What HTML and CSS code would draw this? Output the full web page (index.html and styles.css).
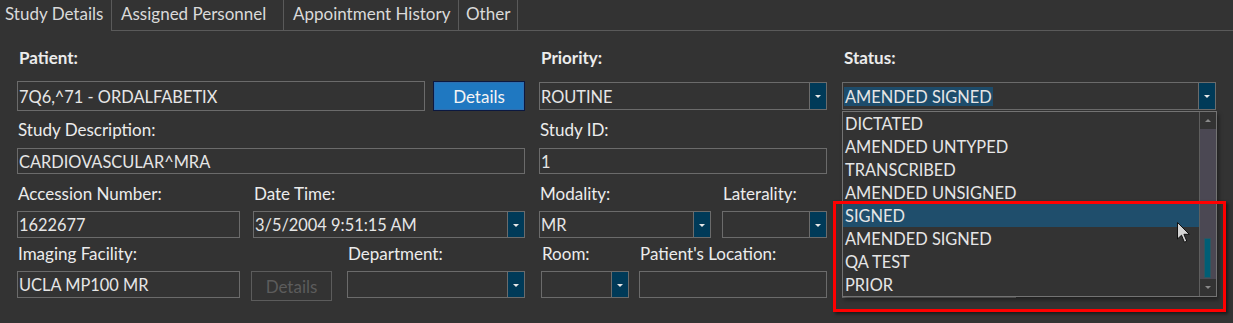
FILE: index.html
```html
<!DOCTYPE html>
<html lang="en">
<head>
  <meta charset="UTF-8" />
  <title>Study Details</title>
  <link rel="stylesheet" href="styles.css">
</head>
<body>
  <div class="tabs">
    <div class="tab tab-active">Study Details</div>
    <div class="tab tab-staff">Assigned Personnel</div>
    <div class="tab tab-history">Appointment History</div>
    <div class="tab tab-other">Other</div>
    <div class="tab-fill"></div>
  </div>

  <div class="form">
    <!-- row 1 -->
    <div class="cell r1">
      <div class="field grow">
        <label class="bold">Patient:</label>
        <div class="controls">
          <div class="box tall grow">7Q6,^71 - ORDALFABETIX</div>
          <button class="btn-primary">Details</button>
        </div>
      </div>
    </div>
    <div class="cell r1">
      <div class="field grow">
        <label class="bold">Priority:</label>
        <div class="box combo mid">ROUTINE<span class="drop"></span></div>
      </div>
    </div>
    <div class="cell r1 col-status">
      <div class="field grow">
        <label class="bold">Status:</label>
        <div class="box combo mid"><span class="sel">AMENDED SIGNED</span><span class="drop"></span></div>
      </div>

      <div class="popup">
        <ul class="list">
          <li>DICTATED</li>
          <li>AMENDED UNTYPED</li>
          <li>TRANSCRIBED</li>
          <li>AMENDED UNSIGNED</li>
          <li class="hot">SIGNED</li>
          <li>AMENDED SIGNED</li>
          <li>QA TEST</li>
          <li>PRIOR</li>
        </ul>
        <div class="scroll">
          <span class="arrow up"></span>
          <div class="track"><span class="thumb"></span></div>
          <span class="arrow down"></span>
        </div>
      </div>

      <div class="callout"></div>
      <svg class="cursor" width="14" height="22" viewBox="0 0 14 22">
        <path d="M0.5 0.5 L0.5 17 L4.5 13.2 L7.4 20.2 L9.8 19.2 L6.9 12.3 L12.3 12.3 Z" fill="#d4d4d4" stroke="#111" stroke-width="1"/>
      </svg>
    </div>

    <!-- row 2 -->
    <div class="cell r2">
      <div class="field grow">
        <label>Study Description:</label>
        <div class="box">CARDIOVASCULAR^MRA</div>
      </div>
    </div>
    <div class="cell r2">
      <div class="field grow">
        <label>Study ID:</label>
        <div class="box">1</div>
      </div>
    </div>
    <div class="cell r2 col-status"></div>

    <!-- row 3 -->
    <div class="cell r3">
      <div class="field w-acc">
        <label>Accession Number:</label>
        <div class="box">1622677</div>
      </div>
      <div class="field grow">
        <label>Date Time:</label>
        <div class="box combo">3/5/2004 9:51:15 AM<span class="drop"></span></div>
      </div>
    </div>
    <div class="cell r3 gap-11">
      <div class="field w-mod">
        <label>Modality:</label>
        <div class="box combo">MR<span class="drop"></span></div>
      </div>
      <div class="field grow">
        <label>Laterality:</label>
        <div class="box combo"><span class="drop"></span></div>
      </div>
    </div>
    <div class="cell r3 col-status"></div>

    <!-- row 4 -->
    <div class="cell r4 gap-11">
      <div class="field w-fac">
        <label>Imaging Facility:</label>
        <div class="box">UCLA MP100 MR</div>
      </div>
      <div class="field">
        <label>&nbsp;</label>
        <button class="btn-off">Details</button>
      </div>
      <div class="field grow pad-l">
        <label>Department:</label>
        <div class="box combo"><span class="drop"></span></div>
      </div>
    </div>
    <div class="cell r4 gap-10">
      <div class="field w-room">
        <label>Room:</label>
        <div class="box combo"><span class="drop"></span></div>
      </div>
      <div class="field grow">
        <label>Patient's Location:</label>
        <div class="box"></div>
      </div>
    </div>
    <div class="cell r4 col-status">
      <div class="field w-hidden">
        <label>&nbsp;</label>
        <div class="box"></div>
      </div>
    </div>
  </div>
</body>
</html>
```

FILE: styles.css
```css
/* dark study form */
html, body {
  height: 100%;
}

body {
  margin: 0;
  background: #333333;
  color: #ececec;
  font-family: Lato, 'Open Sans', sans-serif;
  font-size: 17px;
}

/* tab strip */
.tabs {
  display: flex;
  height: 31px;
}

.tab {
  box-sizing: border-box;
  height: 31px;
  line-height: 28px;
  font-size: 17px;
  color: #dadada;
  padding-left: 9px;
  border-right: 1px solid #5a5a5a;
  border-bottom: 1px solid #5a5a5a;
  white-space: nowrap;
}

.tab-active {
  width: 111px;
  padding-left: 5px;
  border: none;
}

.tab-staff {
  width: 173px;
  border-left: 1px solid #5a5a5a;
}

.tab-history { width: 175px; }
.tab-other { width: 59px; padding-left: 7px; }

.tab-fill {
  flex: 1;
  border-bottom: 1px solid #5a5a5a;
}

/* form grid */
.form {
  display: grid;
  grid-template-columns: 508px 288px 375px;
  column-gap: 14px;
  padding: 17px 0 24px 17px;
}

.cell {
  display: flex;
  gap: 13px;
}

.col-status { margin-left: 1px; }
.r1.col-status { position: relative; }

.gap-11 { gap: 11px; }
.gap-10 { gap: 10px; }

.field {
  display: flex;
  flex-direction: column;
}

.grow { flex: 1; }
.w-acc { width: 223px; }
.w-mod { width: 172px; }
.w-fac { width: 223px; }
.w-room { width: 88px; margin-left: 2px; }
.w-hidden { width: 174px; }
.pad-l { margin-left: 4px; }

label {
  display: block;
  height: 20px;
  line-height: 20px;
  padding-left: 1px;
  white-space: nowrap;
}

label.bold {
  font-weight: 700;
  padding-left: 2px;
}

/* row spacing */
.r1 label { margin-bottom: 13px; }
.r2 { margin-top: 9px; }
.r2 label { margin-bottom: 8px; }
.r3 { margin-top: 10px; }
.r3 label { margin-bottom: 7px; }
.r4 { margin-top: 6px; }
.r4 label { margin-bottom: 7px; }

.controls {
  display: flex;
  gap: 8px;
}

/* inputs */
.box {
  box-sizing: border-box;
  position: relative;
  height: 27px;
  border: 1px solid #6b6b6b;
  padding: 0 1px;
  display: flex;
  align-items: center;
  white-space: nowrap;
  color: #e6e6e6;
  font-size: 16.4px;
}

.r2 .box { height: 26px; }
.box.tall { height: 30px; }
.box.mid { height: 28px; margin-top: 1px; }

.combo .drop {
  position: absolute;
  top: 0;
  right: 0;
  bottom: 0;
  width: 16px;
  background: #003a58;
  border-left: 1px solid #6b6b6b;
}

.combo .drop::after {
  content: "";
  position: absolute;
  left: 5px;
  top: 50%;
  margin-top: -1px;
  border-left: 3px solid transparent;
  border-right: 3px solid transparent;
  border-top: 3px solid #e8e8e8;
}

.sel {
  background: #1d4c6b;
  padding: 0 1px;
}

/* buttons */
button {
  font-family: inherit;
  font-size: 17px;
  cursor: pointer;
}

.btn-primary {
  width: 92px;
  height: 30px;
  background: #1f78c1;
  color: #f4f4f4;
  border: 1px solid #0b1840;
  box-shadow: inset 0 0 0 1px #2f6fb0;
}

.btn-off {
  width: 81px;
  height: 30px;
  background: transparent;
  color: #5c5c5c;
  border: 1px solid #5c5c5c;
}

/* status dropdown list */
.popup {
  position: absolute;
  left: 0;
  top: 63px;
  width: 375px;
  height: 186px;
  box-sizing: border-box;
  background: #333333;
  border: 1px solid #737373;
  display: flex;
  z-index: 5;
  box-shadow: 2px 3px 4px rgba(0, 0, 0, 0.35);
}

.list {
  list-style: none;
  margin: 0;
  padding: 0;
  flex: 1;
}

.list li {
  height: 23px;
  line-height: 23px;
  padding-left: 2px;
  color: #e6e6e6;
  font-size: 16.4px;
}

.list li.hot { background: #1f4e6c; }

.scroll {
  width: 16px;
  display: flex;
  flex-direction: column;
  border-left: 1px solid #5e5e5e;
}

.arrow {
  height: 17px;
  background: #333333;
  position: relative;
}

.arrow::after {
  content: "";
  position: absolute;
  left: 5px;
  top: 7px;
  border-left: 3px solid transparent;
  border-right: 3px solid transparent;
}

.arrow.up::after { border-bottom: 3px solid #8a8a8a; }
.arrow.down::after { border-top: 3px solid #8a8a8a; }

.track {
  flex: 1;
  background: #4b4853;
  position: relative;
}

.thumb {
  position: absolute;
  left: 4px;
  width: 7px;
  top: 109px;
  bottom: 1px;
  background: #005e76;
  border: 1px solid #2e5560;
  box-sizing: border-box;
}

/* red annotation box */
.callout {
  position: absolute;
  left: -9px;
  top: 153px;
  width: 393px;
  height: 111px;
  box-sizing: border-box;
  border: 3px solid #ff0000;
  box-shadow: 2px 2px 3px rgba(0, 0, 0, 0.5);
  z-index: 6;
}

.cursor {
  position: absolute;
  left: 335px;
  top: 174px;
  z-index: 7;
}
```
